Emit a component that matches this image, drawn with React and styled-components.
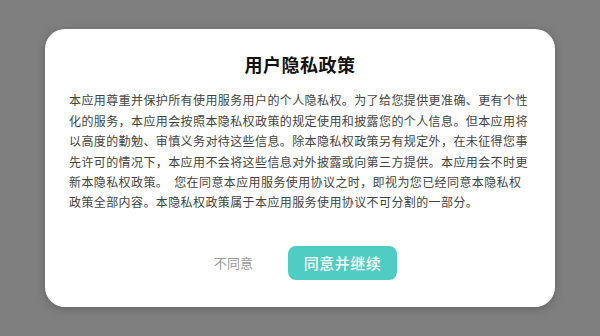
import React from 'react';
import styled, { createGlobalStyle } from 'styled-components';

const GlobalStyle = createGlobalStyle`
  html, body {
    margin: 0;
    padding: 0;
  }
  body {
    font-family: "Noto Sans CJK SC", "Noto Sans", sans-serif;
  }
`;

const Overlay = styled.div`
  width: 600px;
  height: 336px;
  background: #7f7f7f;
  display: flex;
  align-items: center;
  justify-content: center;
`;

const Dialog = styled.div`
  width: 510px;
  box-sizing: border-box;
  background: #fff;
  border-radius: 20px;
  box-shadow: 0 2px 10px rgba(0, 0, 0, 0.22);
  padding: 22px 22px 27px 22px;
  display: flex;
  flex-direction: column;
  align-items: center;
`;

const Title = styled.h2`
  margin: 0;
  font-size: 18px;
  letter-spacing: 0.5px;
  line-height: 26px;
  font-weight: 700;
  color: #111;
`;

const Body = styled.p`
  margin: 13px 0 0 0;
  width: 462px;
  font-size: 12px;
  letter-spacing: 0.4px;
  line-height: 20.4px;
  color: #444;
  text-align: left;
`;

const Space = styled.span`
  display: inline-block;
  width: 6px;
`;

const Actions = styled.div`
  margin-top: 33px;
  align-self: stretch;
  display: flex;
  justify-content: center;
  padding-right: 24px;
`;

const Button = styled.button`
  width: 109px;
  height: 34px;
  border: none;
  border-radius: 8px;
  font-family: inherit;
  cursor: pointer;
  background: ${(p) => (p.primary ? '#4fcdc3' : 'transparent')};
  color: ${(p) => (p.primary ? '#fff' : '#9a9a9a')};
  font-size: ${(p) => (p.primary ? '15px' : '13px')};
  font-weight: ${(p) => (p.primary ? 500 : 400)};
  letter-spacing: ${(p) => (p.primary ? '0.5px' : '0')};
`;

const PART_ONE =
  '本应用尊重并保护所有使用服务用户的个人隐私权。为了给您提供更准确、更有个性化的服务，本应用会按照本隐私权政策的规定使用和披露您的个人信息。但本应用将以高度的勤勉、审慎义务对待这些信息。除本隐私权政策另有规定外，在未征得您事先许可的情况下，本应用不会将这些信息对外披露或向第三方提供。本应用会不时更新本隐私权政策。';
const PART_TWO =
  '您在同意本应用服务使用协议之时，即视为您已经同意本隐私权政策全部内容。本隐私权政策属于本应用服务使用协议不可分割的一部分。';

function App() {
  return (
    <>
      <GlobalStyle />
      <Overlay>
        <Dialog>
          <Title>用户隐私政策</Title>
          <Body>
            {PART_ONE}
            <Space />
            {PART_TWO}
          </Body>
          <Actions>
            <Button>不同意</Button>
            <Button primary>同意并继续</Button>
          </Actions>
        </Dialog>
      </Overlay>
    </>
  );
}

export default App;
